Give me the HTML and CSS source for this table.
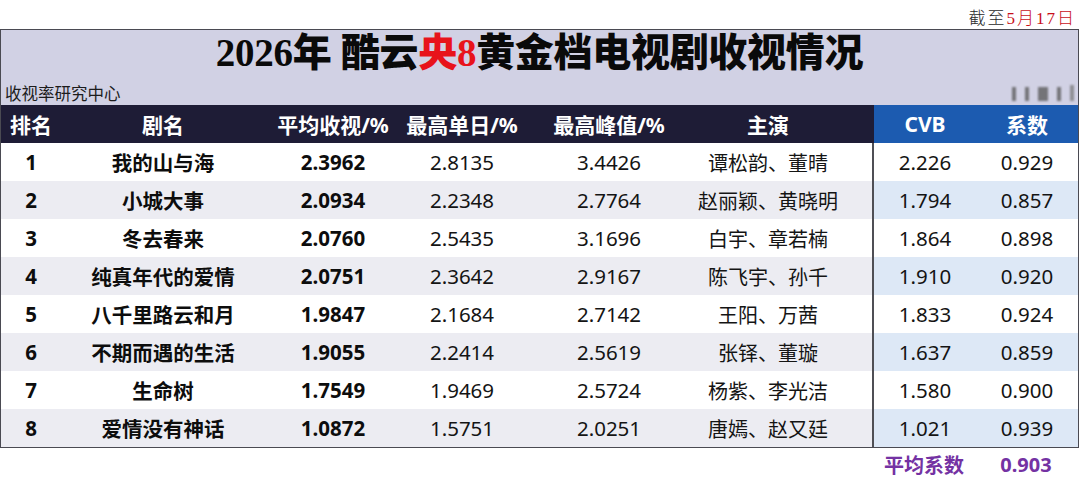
FILE: index.html
```html
<!DOCTYPE html>
<html lang="zh">
<head>
<meta charset="utf-8">
<link rel="stylesheet" href="styles.css">
</head>
<body>
<div class="topbar"><span class="date">截至<em>5月17日</em></span></div>
<div class="board">
  <div class="title-band">
    <h1 class="title">2026年 酷云<span class="red">央8</span>黄金档电视剧收视情况</h1>
    <div class="sub-row">
      <span class="source">收视率研究中心</span>
      <span class="mark"><i></i><i></i><i class="w"></i><i></i><i class="t"></i></span>
    </div>
  </div>
  <div class="row head">
    <div class="c">排名</div><div class="c">剧名</div><div class="c">平均收视/%</div><div class="c">最高单日/%</div><div class="c">最高峰值/%</div><div class="c cast">主演</div><div class="c cv">CVB</div><div class="c cv">系数</div>
  </div>
  <div class="row"><div class="c b">1</div><div class="c b">我的山与海</div><div class="c b">2.3962</div><div class="c">2.8135</div><div class="c">3.4426</div><div class="c cast">谭松韵、董晴</div><div class="c cv">2.226</div><div class="c cv">0.929</div></div>
  <div class="row alt"><div class="c b">2</div><div class="c b">小城大事</div><div class="c b">2.0934</div><div class="c">2.2348</div><div class="c">2.7764</div><div class="c cast">赵丽颖、黄晓明</div><div class="c cv">1.794</div><div class="c cv">0.857</div></div>
  <div class="row"><div class="c b">3</div><div class="c b">冬去春来</div><div class="c b">2.0760</div><div class="c">2.5435</div><div class="c">3.1696</div><div class="c cast">白宇、章若楠</div><div class="c cv">1.864</div><div class="c cv">0.898</div></div>
  <div class="row alt"><div class="c b">4</div><div class="c b">纯真年代的爱情</div><div class="c b">2.0751</div><div class="c">2.3642</div><div class="c">2.9167</div><div class="c cast">陈飞宇、孙千</div><div class="c cv">1.910</div><div class="c cv">0.920</div></div>
  <div class="row"><div class="c b">5</div><div class="c b">八千里路云和月</div><div class="c b">1.9847</div><div class="c">2.1684</div><div class="c">2.7142</div><div class="c cast">王阳、万茜</div><div class="c cv">1.833</div><div class="c cv">0.924</div></div>
  <div class="row alt"><div class="c b">6</div><div class="c b">不期而遇的生活</div><div class="c b">1.9055</div><div class="c">2.2414</div><div class="c">2.5619</div><div class="c cast">张铎、董璇</div><div class="c cv">1.637</div><div class="c cv">0.859</div></div>
  <div class="row"><div class="c b">7</div><div class="c b">生命树</div><div class="c b">1.7549</div><div class="c">1.9469</div><div class="c">2.5724</div><div class="c cast">杨紫、李光洁</div><div class="c cv">1.580</div><div class="c cv">0.900</div></div>
  <div class="row alt"><div class="c b">8</div><div class="c b">爱情没有神话</div><div class="c b">1.0872</div><div class="c">1.5751</div><div class="c">2.0251</div><div class="c cast">唐嫣、赵又廷</div><div class="c cv">1.021</div><div class="c cv">0.939</div></div>
</div>
<div class="summary"><span class="avg">平均系数</span><span class="avg">0.903</span></div>
</body>
</html>
```

FILE: styles.css
```css
* { box-sizing: border-box; margin: 0; padding: 0; }
body {
  width: 1080px;
  height: 482px;
  background: #ffffff;
  font-family: "Noto Sans", "Noto Sans CJK SC", sans-serif;
  color: #141414;
  overflow: hidden;
}
.topbar {
  height: 29px;
  display: flex;
  justify-content: flex-end;
  align-items: center;
  padding-right: 4px;
}
.date {
  font-family: "Liberation Serif", "Noto Sans CJK SC", serif;
  font-size: 17px;
  font-weight: 300;
  color: #2a2a2a;
  letter-spacing: 2px;
  padding-top: 4px;
}
.date em { font-style: normal; color: #c8101a; }
.board {
  width: 1079px;
  border: 1px solid #4a4a52;
}
.title-band {
  height: 75px;
  background: #d1d1e4;
  display: flex;
  flex-direction: column;
}
.title {
  font-family: "Liberation Serif", "Noto Sans CJK SC", serif;
  font-weight: 900;
  font-size: 39px;
  line-height: 44px;
  height: 45px;
  padding-top: 1px;
  text-align: center;
  color: #0a0a0a;
  letter-spacing: -0.3px;
}
.title .red { color: #e8131b; }
.sub-row {
  flex: 1;
  display: flex;
  justify-content: space-between;
  align-items: flex-end;
  padding: 0 4px 2px 4px;
}
.source {
  font-family: "Noto Sans CJK SC", sans-serif;
  font-size: 16.5px;
  line-height: 20px;
  color: #1c1c1c;
}
.mark {
  display: flex;
  gap: 9px;
  align-items: flex-end;
  padding-bottom: 2px;
  filter: blur(1.2px);
  opacity: 0.75;
}
.mark i { display: block; width: 4px; height: 14px; background: #555; }
.mark i.w { width: 10px; }
.mark i.t { height: 16px; background: #777; }
.row {
  display: grid;
  grid-template-columns: 60px 204px 136px 122px 172px 179px 102px 1fr;
  height: 38px;
  background: #ffffff;
}
.row.alt { background: #ececf2; }
.c {
  display: flex;
  align-items: center;
  justify-content: center;
  font-size: 20.5px;
  white-space: nowrap;
  font-family: "Noto Sans", "Noto Sans CJK SC", sans-serif;
}
.c.b { font-weight: 700; color: #0d0d0d; }
.c.cast { padding-right: 31px; border-right: 2px solid #4f4f55; font-size: 20px; }
.row.alt .c.cv { background: #dde8f6; }
.head { background: #1e1c36; }
.head .c { color: #ffffff; font-weight: 700; font-size: 21px; }
.head .c.cast { border-right-color: #1e1c36; }
.head .c.cv { background: #1c5bb0; }
.summary {
  display: grid;
  grid-template-columns: 873px 102px 102px;
  height: 32px;
}
.summary .avg {
  font-size: 20px;
  font-weight: 700;
  color: #7432a3;
  display: flex;
  align-items: center;
  justify-content: center;
}
.summary .avg:first-child { grid-column: 2; }
```
